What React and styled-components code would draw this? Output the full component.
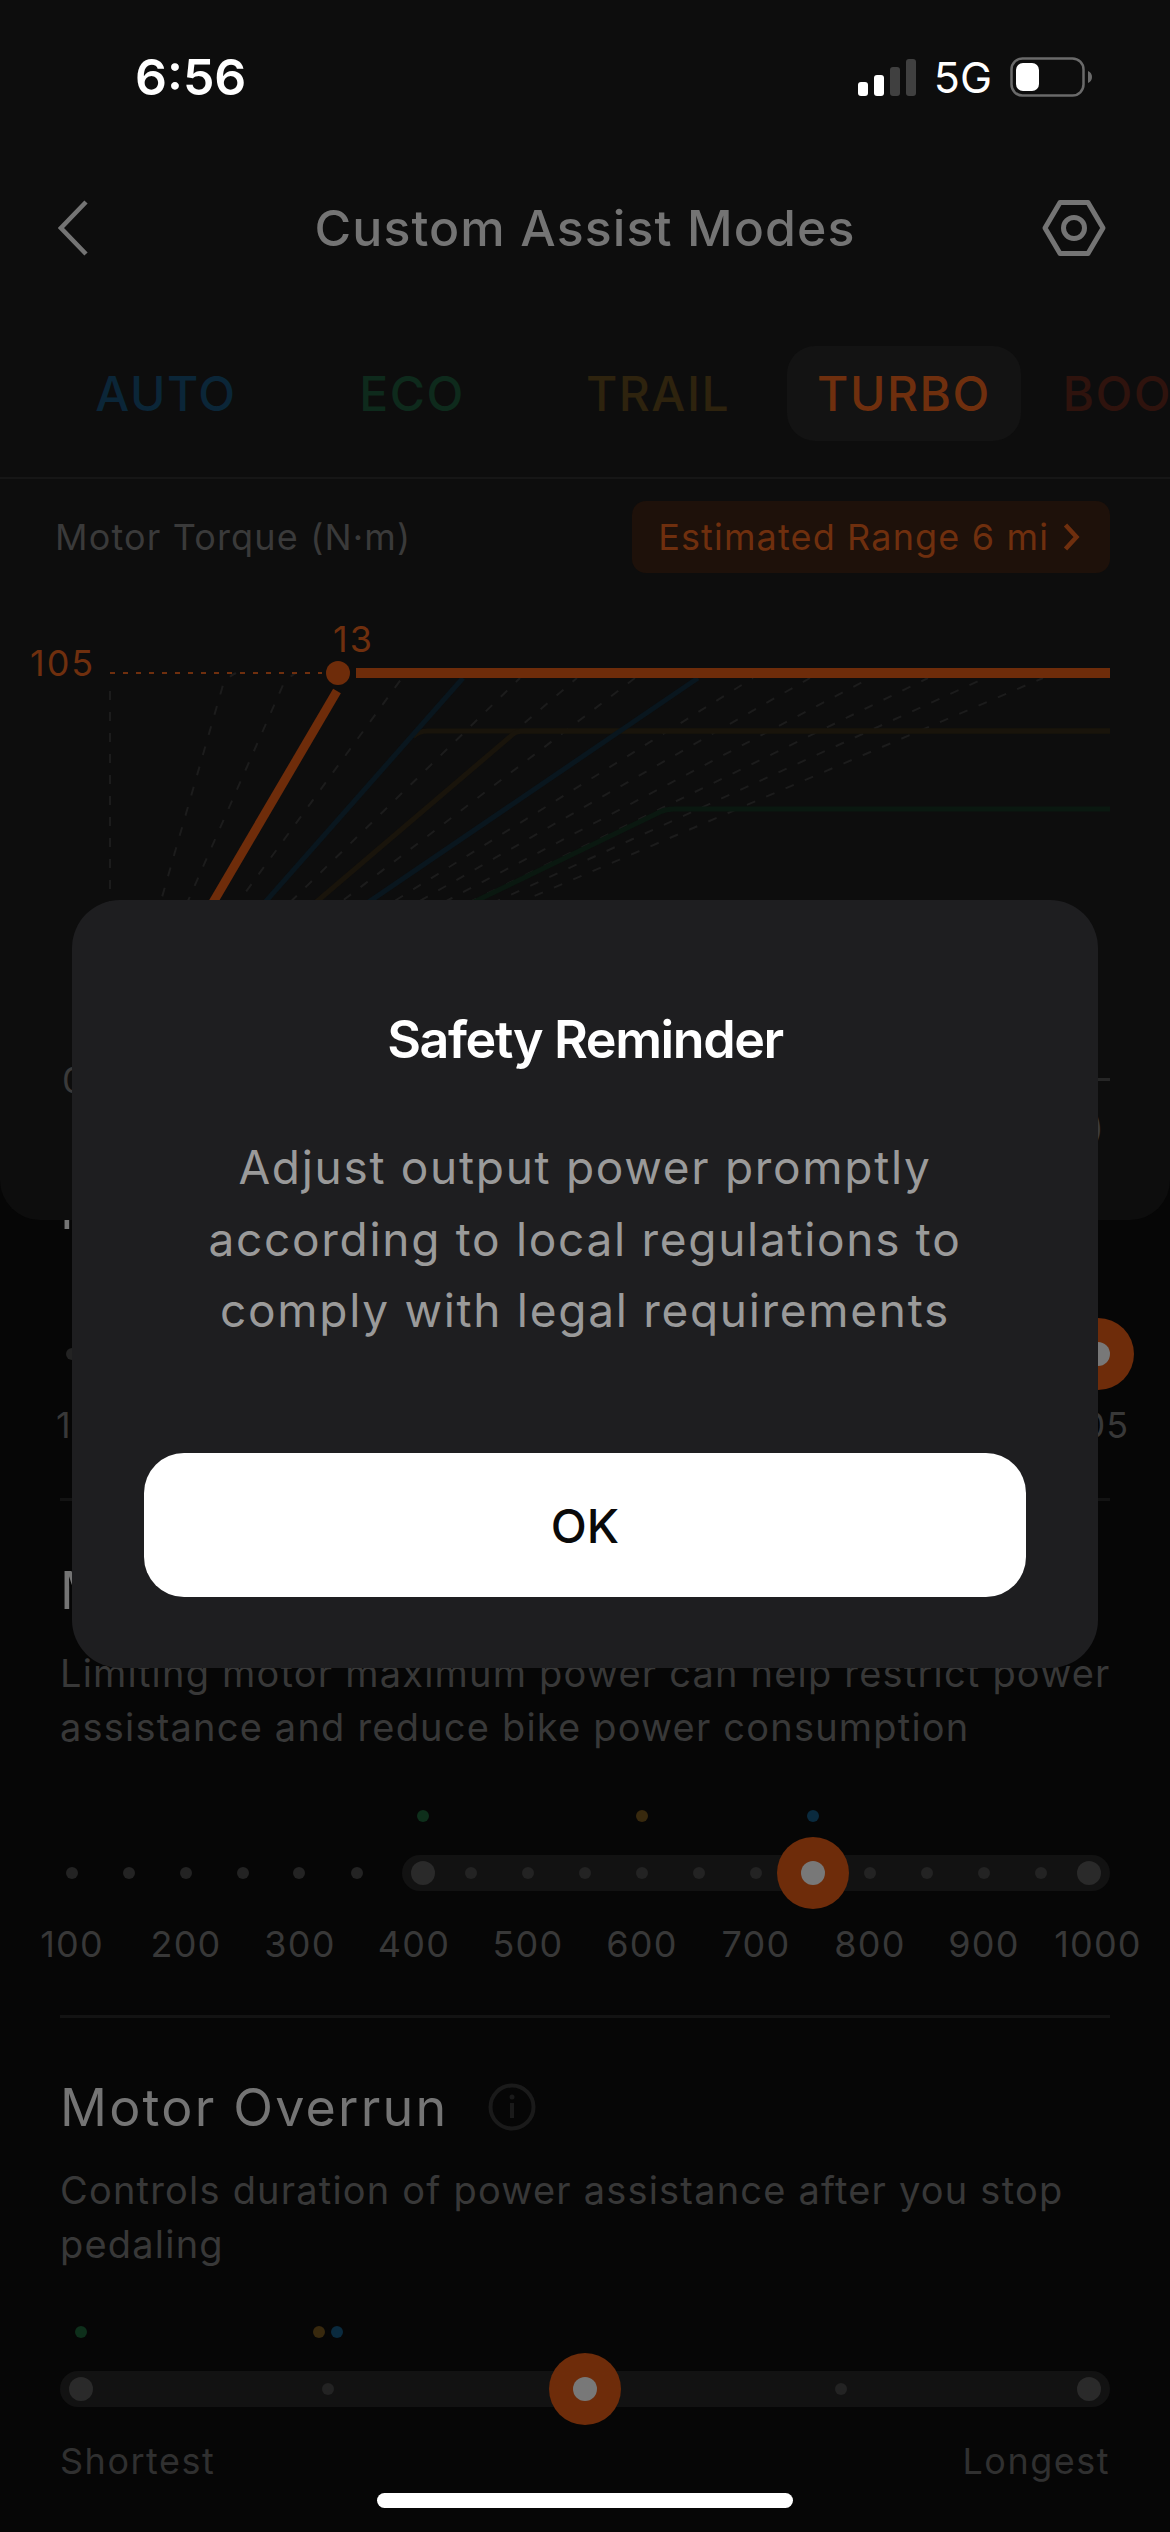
import React from "react";
import styled, { createGlobalStyle } from "styled-components";

const GlobalStyle = createGlobalStyle`
  html, body {
    margin: 0;
    padding: 0;
    background: #060606;
  }
  body {
    font-family: Inter, "Liberation Sans", sans-serif;
  }
`;

const Screen = styled.div`
  position: relative;
  width: 1170px;
  height: 2532px;
  overflow: hidden;
  background: #060606;
`;

const TopCard = styled.div`
  position: relative;
  z-index: 1;
  height: 1220px;
  background: #0d0d0d;
  border-radius: 0 0 40px 40px;
  overflow: hidden;
`;

const StatusBar = styled.div`
  display: flex;
  align-items: center;
  justify-content: space-between;
  height: 154px;
  padding: 0 78px 0 135px;
  color: #fff;
`;
const Time = styled.div`
  font-size: 50px;
  font-weight: 600;
`;
const StatusRight = styled.div`
  display: flex;
  align-items: center;
  gap: 18px;
`;
const Network = styled.div`
  font-size: 43px;
  font-weight: 400;
`;

const NavBar = styled.div`
  display: grid;
  grid-template-columns: 1fr auto 1fr;
  align-items: center;
  height: 148px;
  padding: 0 64px;
`;
const BackSlot = styled.div`
  display: flex;
  margin-left: -6px;
`;
const NavTitle = styled.div`
  font-size: 50px;
  font-weight: 500;
  letter-spacing: 1.1px;
  color: #747474;
`;
const NavRight = styled.div`
  justify-self: end;
  display: flex;
`;

const Tabs = styled.div`
  display: flex;
  margin-top: 44px;
  padding: 0 0 36px 43px;
  border-bottom: 2px solid #161616;
`;
const Tab = styled.div`
  flex: 0 0 234px;
  height: 95px;
  margin: 0 6px;
  display: flex;
  align-items: center;
  justify-content: center;
  border-radius: 28px;
  font-size: 48px;
  font-weight: 500;
  letter-spacing: 1.5px;
  color: ${p => p.$color};
  background: ${p => (p.$active ? "#131313" : "transparent")};
`;

const TorqueRow = styled.div`
  display: flex;
  align-items: center;
  justify-content: space-between;
  margin-top: 22px;
  padding: 0 60px 0 55px;
`;
const TorqueLabel = styled.div`
  font-size: 36px;
  letter-spacing: 1.15px;
  color: #3a3a3a;
`;
const RangeChip = styled.div`
  display: flex;
  align-items: center;
  gap: 14px;
  height: 72px;
  padding: 0 30px 0 26px;
  border-radius: 14px;
  background: #1e110a;
  font-size: 36px;
  letter-spacing: 1.15px;
  color: #6f2f0e;
`;

const Chart = styled.svg`
  display: block;
`;
const ChartText = styled.text`
  font-size: 36px;
  letter-spacing: 2px;
  fill: ${p => p.$color};
`;

const Body = styled.div`
  margin-top: -40px;
  padding: 0 60px;
`;
const SectionTitle = styled.div`
  display: flex;
  align-items: center;
  gap: 40px;
  height: 60px;
  font-size: 52px;
  letter-spacing: 2.2px;
  color: #747474;
`;
const Description = styled.div`
  margin-top: 26px;
  font-size: 38px;
  line-height: 54px;
  letter-spacing: 1.2px;
  white-space: nowrap;
  color: #383838;
`;
const Divider = styled.div`
  margin-top: ${p => p.$top}px;
  margin-bottom: 59px;
  height: 3px;
  background: #131313;
`;

const Rail = styled.div`
  position: relative;
  height: 72px;
  margin-top: ${p => p.$top}px;
`;
const Track = styled.div`
  position: absolute;
  top: 18px;
  left: ${p => p.$from}px;
  right: 0;
  height: 36px;
  border-radius: 18px;
  background: #121212;
`;
const Tick = styled.div`
  position: absolute;
  top: 36px;
  left: ${p => p.$x}px;
  width: ${p => (p.$big ? 24 : 12)}px;
  height: ${p => (p.$big ? 24 : 12)}px;
  border-radius: 50%;
  transform: translate(-50%, -50%);
  background: ${p => (p.$big ? "#2a2a2a" : "#232323")};
`;
const Marker = styled.div`
  position: absolute;
  top: -21px;
  left: ${p => p.$x}px;
  width: 12px;
  height: 12px;
  border-radius: 50%;
  transform: translate(-50%, -50%);
  background: ${p => p.$color};
`;
const Thumb = styled.div`
  position: absolute;
  top: 0;
  left: ${p => p.$x}px;
  width: 72px;
  height: 72px;
  display: flex;
  align-items: center;
  justify-content: center;
  border-radius: 50%;
  transform: translateX(-50%);
  background: #6e2c0a;
  &::after {
    content: "";
    width: 24px;
    height: 24px;
    border-radius: 50%;
    background: #787878;
  }
`;
const Scale = styled.div`
  display: flex;
  justify-content: space-between;
  margin: 13px -45px 0;
`;
const ScaleLabel = styled.div`
  width: 114px;
  text-align: center;
  font-size: 36px;
  line-height: 44px;
  letter-spacing: 1.2px;
  color: #383838;
`;
const EdgeLabel = styled(ScaleLabel)`
  text-indent: 8px;
`;
const EndLabels = styled.div`
  display: flex;
  justify-content: space-between;
  margin-top: 14px;
  font-size: 36px;
  line-height: 44px;
  letter-spacing: 1.5px;
  color: #303030;
`;

const Overlay = styled.div`
  position: absolute;
  inset: 0;
  z-index: 2;
  display: flex;
  justify-content: center;
  align-items: flex-start;
  padding-top: 900px;
`;
const Modal = styled.div`
  width: 1026px;
  box-sizing: border-box;
  padding: 110px 72px 71px;
  border-radius: 48px;
  background: #1e1e20;
  text-align: center;
`;
const ModalTitle = styled.div`
  height: 60px;
  line-height: 60px;
  font-size: 52px;
  font-weight: 600;
  letter-spacing: -1.4px;
  color: #fff;
`;
const ModalText = styled.div`
  margin-top: 62px;
  font-size: 46px;
  line-height: 71.5px;
  letter-spacing: 1.7px;
  color: #9a9a9a;
`;
const OkButton = styled.div`
  display: flex;
  align-items: center;
  justify-content: center;
  height: 144px;
  margin-top: 106px;
  padding-top: 2px;
  box-sizing: border-box;
  border-radius: 40px;
  background: #fff;
  font-size: 47px;
  font-weight: 500;
  color: #0a0a0a;
`;
const HomeIndicator = styled.div`
  position: absolute;
  z-index: 3;
  left: 377px;
  bottom: 24px;
  width: 416px;
  height: 15px;
  border-radius: 8px;
  background: #fff;
`;

const TABS = [
  { name: "AUTO", color: "#0b2638" },
  { name: "ECO", color: "#0e2a1c" },
  { name: "TRAIL", color: "#2e230e" },
  { name: "TURBO", color: "#6f2f0e", active: true },
  { name: "BOOST", color: "#2f130d" }
];

// end points of the faint dashed curves, all of them start at the chart origin
const GUIDES = [402, 520, 577, 635, 753, 810, 870, 928, 985, 1043];
const ORIGIN = "M110 1078";

const PAD = 60;

const Slider = ({ top, from, ticks = [], bigTicks = [], markers = [], thumb }) => (
  <Rail $top={top}>
    {from !== undefined && <Track $from={from - PAD} />}
    {ticks.map(x => (
      <Tick key={x} $x={x - PAD} />
    ))}
    {bigTicks.map(x => (
      <Tick key={x} $x={x - PAD} $big />
    ))}
    {markers.map(m => (
      <Marker key={m.x} $x={m.x - PAD} $color={m.color} />
    ))}
    <Thumb $x={thumb - PAD} />
  </Rail>
);

const GREEN = "#0e2f1b";
const AMBER = "#38290e";
const BLUE = "#0a2a3e";

const SignalIcon = () => (
  <svg width="58" height="37" viewBox="0 0 58 37">
    <rect x="0" y="23" width="10" height="14" rx="3" fill="#fff" />
    <rect x="16" y="16" width="10" height="21" rx="3" fill="#fff" />
    <rect x="32" y="8" width="10" height="29" rx="3" fill="#404040" />
    <rect x="48" y="0" width="10" height="37" rx="3" fill="#404040" />
  </svg>
);

const BatteryIcon = () => (
  <svg width="82" height="40" viewBox="0 0 82 40">
    <rect x="1.5" y="1.5" width="72" height="37" rx="11" fill="none" stroke="#6a6a6a" strokeWidth="2.5" />
    <rect x="6" y="6" width="23" height="28" rx="7" fill="#fff" />
    <path d="M78 14c2.5 1 4 3.2 4 6s-1.500 5-4 6z" fill="#6a6a6a" />
  </svg>
);

const BackIcon = () => (
  <svg width="30" height="56" viewBox="0 0 30 56">
    <path d="M28 2L3 28l25 26" fill="none" stroke="#747474" strokeWidth="4.500" />
  </svg>
);

const SettingsIcon = () => (
  <svg width="64" height="56" viewBox="0 0 64 56">
    <path d="M18 2.500h28L61 28 46 53.500H18L3 28z" fill="none" stroke="#747474" strokeWidth="5" strokeLinejoin="round" />
    <circle cx="32" cy="28" r="10.500" fill="none" stroke="#747474" strokeWidth="5" />
  </svg>
);

const ChevronIcon = () => (
  <svg width="17" height="28" viewBox="0 0 17 28">
    <path d="M2.500 2l11 12-11 12" fill="none" stroke="#6f2f0e" strokeWidth="4.500" />
  </svg>
);

const InfoIcon = () => (
  <svg width="48" height="48" viewBox="0 0 48 48">
    <circle cx="24" cy="24" r="21.500" fill="none" stroke="#1a1a1a" strokeWidth="4" />
    <circle cx="24" cy="14" r="2.500" fill="#1a1a1a" />
    <rect x="22" y="20" width="4" height="15" fill="#1a1a1a" />
  </svg>
);

const TorqueChart = () => (
  <Chart width="1170" height="647" viewBox="0 573 1170 647">
    <g fill="none" stroke="#1c1c1c" strokeWidth="2" strokeDasharray="9 12">
      <path d="M110 1078V680" />
      <path d={`${ORIGIN}L223 685Q226 678 236 673`} />
      <path d={`${ORIGIN}L283 685Q287 678 296 673`} />
      {GUIDES.map(x => (
        <path key={x} d={`${ORIGIN}L${x} 678`} />
      ))}
    </g>
    <path d="M413 737Q418 731 428 731H1110" fill="none" stroke="#19140b" strokeWidth="5" />
    <path d={`${ORIGIN}L512 735Q516 731 524 731H1110`} fill="none" stroke="#19140b" strokeWidth="5" />
    <path d={`${ORIGIN}L660 812Q666 809 674 809H1110`} fill="none" stroke="#0a1810" strokeWidth="5" />
    <path d={`${ORIGIN}L463 678`} fill="none" stroke="#09161e" strokeWidth="5" />
    <path d={`${ORIGIN}L698 678`} fill="none" stroke="#09161e" strokeWidth="5" />
    <path d="M110 673H322" fill="none" stroke="#6f2f0e" strokeWidth="2" strokeDasharray="5 8" />
    <path d={`${ORIGIN}L337 691`} fill="none" stroke="#6e2c0a" strokeWidth="9" />
    <path d="M356 673H1110" fill="none" stroke="#6e2c0a" strokeWidth="10" />
    <circle cx="338" cy="673" r="12" fill="#6e2c0a" />
    <path d="M110 1079.500H1110" fill="none" stroke="#262626" strokeWidth="3" />
    <ChartText x="30" y="676" $color="#6f2f0e">105</ChartText>
    <ChartText x="333" y="652" $color="#6f2f0e">13</ChartText>
    <ChartText x="62" y="1093" $color="#3a3a3a">0</ChartText>
    <ChartText x="1106" y="1140" textAnchor="end" $color="#3a3a3a">Speed (mph)</ChartText>
  </Chart>
);

const App = () => {
  const powerLabels = [100, 200, 300, 400, 500, 600, 700, 800, 900, 1000];
  const powerTicks = [72, 129, 186, 243, 299, 357, 471, 528, 585, 642, 699, 756, 870, 927, 984, 1041];
  return (
    <Screen>
      <GlobalStyle />
      <TopCard>
        <StatusBar>
          <Time>6:56</Time>
          <StatusRight>
            <SignalIcon />
            <Network>5G</Network>
            <BatteryIcon />
          </StatusRight>
        </StatusBar>
        <NavBar>
          <BackSlot>
            <BackIcon />
          </BackSlot>
          <NavTitle>Custom Assist Modes</NavTitle>
          <NavRight>
            <SettingsIcon />
          </NavRight>
        </NavBar>
        <Tabs>
          {TABS.map(tab => (
            <Tab key={tab.name} $color={tab.color} $active={tab.active}>
              {tab.name}
            </Tab>
          ))}
        </Tabs>
        <TorqueRow>
          <TorqueLabel>Motor Torque (N·m)</TorqueLabel>
          <RangeChip>
            Estimated Range 6 mi
            <ChevronIcon />
          </RangeChip>
        </TorqueRow>
        <TorqueChart />
      </TopCard>

      <Body>
        <SectionTitle>Max Torque</SectionTitle>
        <Slider top={78} ticks={[72]} thumb={1098} />
        <Scale>
          <EdgeLabel>10</EdgeLabel>
          <ScaleLabel>105</ScaleLabel>
        </Scale>
        <Divider $top={51} />

        <SectionTitle>Max Power</SectionTitle>
        <Description>
          Limiting motor maximum power can help restrict power
          <br />
          assistance and reduce bike power consumption
        </Description>
        <Slider
          top={83}
          from={402}
          ticks={powerTicks}
          bigTicks={[423, 1089]}
          markers={[
            { x: 423, color: GREEN },
            { x: 642, color: AMBER },
            { x: 813, color: BLUE }
          ]}
          thumb={813}
        />
        <Scale>
          {powerLabels.map(label => (
            <ScaleLabel key={label}>{label}</ScaleLabel>
          ))}
        </Scale>
        <Divider $top={49} />

        <SectionTitle>
          Motor Overrun
          <InfoIcon />
        </SectionTitle>
        <Description>
          Controls duration of power assistance after you stop
          <br />
          pedaling
        </Description>
        <Slider
          top={82}
          from={60}
          ticks={[328, 841]}
          bigTicks={[81, 1089]}
          markers={[
            { x: 81, color: GREEN },
            { x: 319, color: AMBER },
            { x: 337, color: BLUE }
          ]}
          thumb={585}
        />
        <EndLabels>
          <span>Shortest</span>
          <span>Longest</span>
        </EndLabels>
      </Body>

      <Overlay>
        <Modal>
          <ModalTitle>Safety Reminder</ModalTitle>
          <ModalText>
            Adjust output power promptly
            <br />
            according to local regulations to
            <br />
            comply with legal requirements
          </ModalText>
          <OkButton>OK</OkButton>
        </Modal>
      </Overlay>
      <HomeIndicator />
    </Screen>
  );
};

export default App;
